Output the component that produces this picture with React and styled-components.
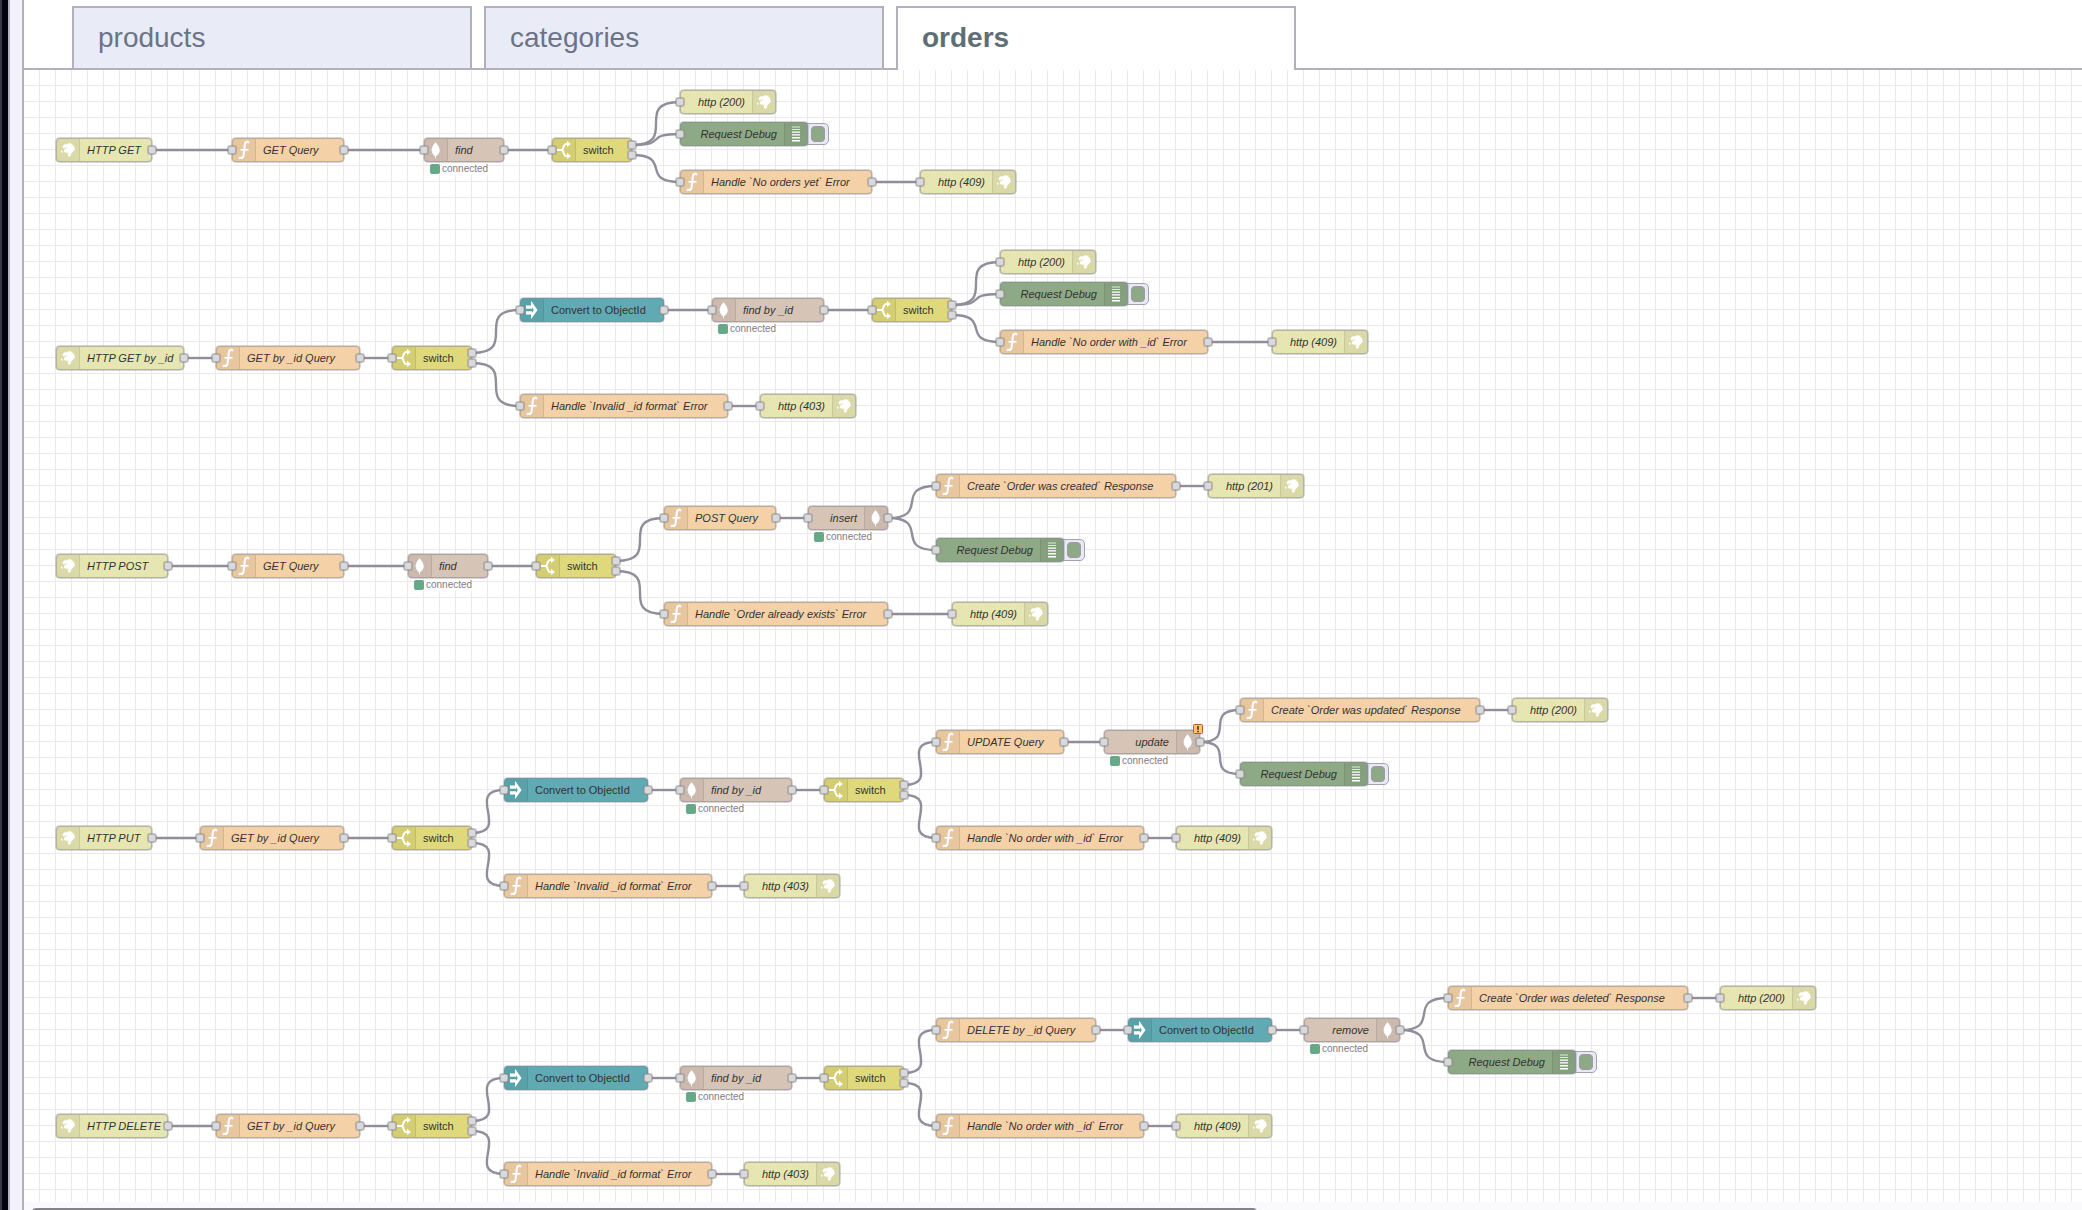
import React from "react";
import styled, { createGlobalStyle } from "styled-components";

const CELL = 16;

const GlobalStyle = createGlobalStyle`
  *, *::before, *::after { box-sizing: border-box; }
  body {
    margin: 0;
    overflow: hidden;
    background: #fff;
    font-family: "Liberation Sans", Arial, sans-serif;
  }
`;

const Page = styled.div`
  display: flex;
  height: 100vh;
`;

const WindowEdge = styled.div`
  flex: none;
  width: 10px;
  background: #020210;
  border-left: 2px solid #393846;
  border-right: 2px solid #b4b2bf;
`;

const PaletteEdge = styled.div`
  flex: none;
  width: 14px;
  background: #f2f1fc;
  border-right: 2px solid #b2b0bd;
`;

const Workspace = styled.main`
  flex: 1;
  min-width: 0;
  display: flex;
  flex-direction: column;
`;

const TabBar = styled.nav`
  flex: none;
  display: flex;
  align-items: flex-end;
  gap: 12px;
  height: 70px;
  padding-left: 48px;
  border-bottom: 2px solid #b2b0bd;
`;

const Tab = styled.button`
  width: 400px;
  height: ${(p) => (p.$active ? 64 : 62)}px;
  margin: 0 0 ${(p) => (p.$active ? -2 : 0)}px;
  padding: 0 24px ${(p) => (p.$active ? 2 : 0)}px;
  border: 2px solid #b2b0bd;
  border-bottom: 0;
  background: ${(p) => (p.$active ? "#fff" : "#e9ebf7")};
  color: ${(p) => (p.$active ? "#5e6e75" : "#6b7487")};
  font: ${(p) => (p.$active ? "bold" : "normal")} 28px/60px "Liberation Sans", Arial, sans-serif;
  text-align: left;
`;

const Canvas = styled.div`
  position: relative;
  flex: 1;
  min-height: 0;
  overflow: hidden;
  background-color: #fff;
  background-image:
    linear-gradient(to right, transparent 15px, #eae8f6 15px),
    linear-gradient(to bottom, transparent 15px, #eae8f6 15px);
  background-size: 16px 16px;
`;

const Wires = styled.svg`
  position: absolute;
  inset: 0;
  width: 100%;
  height: 100%;
  fill: none;
  stroke: #908e9b;
  stroke-width: 2.4;
`;

const NodeBox = styled.div`
  position: absolute;
  height: 24px;
`;

const Body = styled.div`
  position: relative;
  display: flex;
  flex-direction: ${(p) => (p.$flip ? "row-reverse" : "row")};
  align-items: center;
  height: 24px;
  overflow: hidden;
  border: 1px solid rgba(130, 130, 140, 0.5);
  border-radius: 4px;
  background: ${(p) => p.$color};
  box-shadow: 0 0 0 1px rgba(140, 138, 145, 0.35);
`;

const IconCell = styled.span`
  flex: none;
  display: flex;
  align-items: center;
  justify-content: center;
  width: 23px;
  height: 22px;
  background: rgba(0, 0, 0, 0.05);
  border-${(p) => (p.$flip ? "left" : "right")}: 1px solid rgba(0, 0, 0, 0.08);
`;

const Label = styled.span`
  padding: 1px 7px 0;
  color: #333;
  font-size: 11px;
  line-height: 21px;
  font-style: ${(p) => (p.$plain ? "normal" : "italic")};
  white-space: nowrap;
`;

const Port = styled.span`
  position: absolute;
  top: ${(p) => 8 + p.$shift}px;
  ${(p) => p.$side}: -4px;
  width: 8px;
  height: 8px;
  border: 1px solid #b2b1b5;
  border-radius: 2px;
  background: #d9d9d9;
  box-shadow: 0 0 0 1px rgba(130, 128, 138, 0.45);
`;

const Toggle = styled.button`
  position: absolute;
  top: 1px;
  right: -21px;
  display: flex;
  align-items: center;
  justify-content: flex-end;
  width: 28px;
  height: 22px;
  padding: 0 3px;
  border: 1px solid #a3a2b3;
  border-radius: 5px;
  background: #e8e8f6;
`;

const ToggleMark = styled.span`
  width: 14px;
  height: 16px;
  border: 1px solid #9a9ca0;
  border-radius: 4px;
  background: #8ea986;
`;

const Status = styled.span`
  position: absolute;
  top: 25px;
  left: 6px;
  display: flex;
  align-items: center;
  gap: 2px;
  height: 12px;
  color: #7e7d88;
  font-size: 10px;
  line-height: 12px;
`;

const StatusDot = styled.span`
  width: 10px;
  height: 10px;
  border-radius: 2px;
  background: #65a88a;
`;

const StatusText = styled.span`
  background: #fff;
`;

const Warning = styled.svg`
  position: absolute;
  top: -6px;
  right: -3px;
  width: 10px;
  height: 10px;
`;

const Footer = styled.div`
  flex: none;
  height: 8px;
  padding: 6px 8px 0;
  overflow: hidden;
  background: #fafafd;
`;

const ScrollThumb = styled.div`
  width: 60%;
  height: 8px;
  border-radius: 4px;
  background: #83828d;
`;

function Globe() {
  return (
    <svg width="16" height="16" viewBox="0 0 16 16" fill="#fff">
      <path d="M2.600 4.400 4 2.800 6.200 2l.6.800L9 1l2.600.700 2 2 1.200 2.700-.3 1.800-1 .2-.6 1.500-1.600 1.700-.4 1.900-1.300 1.300-1.200-.2-.5-1.600.1-1.900-1.700-.6-1.300.2-1.200-1.300.4-1.700 1.600-1.200 1.600-.1-.4-.9-1.600.3-1.600 1L3.300 6z" />
      <path d="M.9 8.300 2.200 8.900l.6 1.400-.8.600-.9-1z" />
    </svg>
  );
}

function Fn() {
  return (
    <svg width="16" height="20" viewBox="0 0 16 20" fill="none" stroke="#fff" strokeWidth="2.200">
      <path d="M13 2.700C11.800 1.200 9.200 1.300 8.800 4.500L7.700 14.800c-.4 3.500-2.900 3.700-4.700 2.500" />
      <path d="M4.500 9.800h8" strokeWidth="1.700" />
    </svg>
  );
}

function Leaf() {
  return (
    <svg width="16" height="20" viewBox="0 0 16 20" fill="#fff">
      <path d="M7.500 2c2.600 3 4.200 5.400 4.200 8.200 0 2.600-1.600 4.800-3.700 6v2.300h-.8v-2.300c-2-1.200-3.600-3.400-3.600-6C3.600 7.400 5.100 5 7.500 2z" />
    </svg>
  );
}

function Fork() {
  return (
    <svg width="20" height="20" viewBox="0 0 20 20" fill="none" stroke="#fff" strokeWidth="2">
      <path d="M3 10h5" />
      <path d="M14 4h-1.700C9.500 4 10 7.500 8.200 10c1.800 2.500 1.300 6 4.100 6H14" />
      <path d="M13 .8 17 4l-4 3.200zM13 12.800 17 16l-4 3.200z" fill="#fff" stroke="none" />
    </svg>
  );
}

function Arrows() {
  return (
    <svg width="20" height="20" viewBox="0 0 20 20" fill="#fff">
      <path d="M4 5.500h6v3.200H4zM4 11.300h6v3.200H4z" />
      <path d="M9 .8 15.500 10 9 19.200v-4.700L11.800 10 9 5.500z" />
    </svg>
  );
}

function Bars() {
  return (
    <svg width="10" height="18" viewBox="0 0 10 18" fill="#fff">
      <path d="M1 1.500h8v1H1zM1 4h8v1H1z" opacity=".75" />
      <path d="M1 6.500h8v1.200H1zM1 9.200h8v1.300H1zM1 12h8v1.400H1zM1 15h8v1.500H1z" />
    </svg>
  );
}

const KINDS = {
  httpIn: { color: "#e5e6b1", icon: Globe, outs: 1 },
  httpOut: { color: "#e5e6b1", icon: Globe, flip: true, input: true, outs: 0 },
  fn: { color: "#f5d1a7", icon: Fn, input: true, outs: 1 },
  find: { color: "#d6c4b7", icon: Leaf, input: true, outs: 1, status: true },
  store: { color: "#d6c4b7", icon: Leaf, flip: true, input: true, outs: 1, status: true },
  branch: { color: "#e0d97b", icon: Fork, input: true, outs: 2, plain: true },
  convert: { color: "#5faab3", icon: Arrows, input: true, outs: 1, plain: true },
  debug: { color: "#8ea986", icon: Bars, flip: true, input: true, outs: 0 },
};

// id, kind, column, row, columns wide, label
const NODES = [
  ["a1", "httpIn", 2, 5, 6, "HTTP GET"],
  ["a2", "fn", 13, 5, 7, "GET Query"],
  ["a3", "find", 25, 5, 5, "find"],
  ["a4", "branch", 33, 5, 5, "switch"],
  ["a5", "httpOut", 41, 2, 6, "http (200)"],
  ["a6", "debug", 41, 4, 8, "Request Debug"],
  ["a7", "fn", 41, 7, 12, "Handle `No orders yet` Error"],
  ["a8", "httpOut", 56, 7, 6, "http (409)"],

  ["b1", "httpIn", 2, 18, 8, "HTTP GET by _id"],
  ["b2", "fn", 12, 18, 9, "GET by _id Query"],
  ["b3", "branch", 23, 18, 5, "switch"],
  ["b4", "convert", 31, 15, 9, "Convert to ObjectId"],
  ["b5", "find", 43, 15, 7, "find by _id"],
  ["b6", "branch", 53, 15, 5, "switch"],
  ["b7", "httpOut", 61, 12, 6, "http (200)"],
  ["b8", "debug", 61, 14, 8, "Request Debug"],
  ["b9", "fn", 61, 17, 13, "Handle `No order with _id` Error"],
  ["b10", "httpOut", 78, 17, 6, "http (409)"],
  ["b11", "fn", 31, 21, 13, "Handle `Invalid _id format` Error"],
  ["b12", "httpOut", 46, 21, 6, "http (403)"],

  ["c1", "httpIn", 2, 31, 7, "HTTP POST"],
  ["c2", "fn", 13, 31, 7, "GET Query"],
  ["c3", "find", 24, 31, 5, "find"],
  ["c4", "branch", 32, 31, 5, "switch"],
  ["c5", "fn", 40, 28, 7, "POST Query"],
  ["c6", "store", 49, 28, 5, "insert"],
  ["c7", "fn", 57, 26, 15, "Create `Order was created` Response"],
  ["c8", "httpOut", 74, 26, 6, "http (201)"],
  ["c9", "debug", 57, 30, 8, "Request Debug"],
  ["c10", "fn", 40, 34, 14, "Handle `Order already exists` Error"],
  ["c11", "httpOut", 58, 34, 6, "http (409)"],

  ["d1", "httpIn", 2, 48, 6, "HTTP PUT"],
  ["d2", "fn", 11, 48, 9, "GET by _id Query"],
  ["d3", "branch", 23, 48, 5, "switch"],
  ["d4", "convert", 30, 45, 9, "Convert to ObjectId"],
  ["d5", "find", 41, 45, 7, "find by _id"],
  ["d6", "branch", 50, 45, 5, "switch"],
  ["d7", "fn", 57, 42, 8, "UPDATE Query"],
  ["d8", "store", 67.5, 42, 6, "update", true],
  ["d9", "fn", 76, 40, 15, "Create `Order was updated` Response"],
  ["d10", "httpOut", 93, 40, 6, "http (200)"],
  ["d11", "debug", 76, 44, 8, "Request Debug"],
  ["d12", "fn", 57, 48, 13, "Handle `No order with _id` Error"],
  ["d13", "httpOut", 72, 48, 6, "http (409)"],
  ["d14", "fn", 30, 51, 13, "Handle `Invalid _id format` Error"],
  ["d15", "httpOut", 45, 51, 6, "http (403)"],

  ["e1", "httpIn", 2, 66, 7, "HTTP DELETE"],
  ["e2", "fn", 12, 66, 9, "GET by _id Query"],
  ["e3", "branch", 23, 66, 5, "switch"],
  ["e4", "convert", 30, 63, 9, "Convert to ObjectId"],
  ["e5", "find", 41, 63, 7, "find by _id"],
  ["e6", "branch", 50, 63, 5, "switch"],
  ["e7", "fn", 57, 60, 10, "DELETE by _id Query"],
  ["e8", "convert", 69, 60, 9, "Convert to ObjectId"],
  ["e9", "store", 80, 60, 6, "remove"],
  ["e10", "fn", 89, 58, 15, "Create `Order was deleted` Response"],
  ["e11", "httpOut", 106, 58, 6, "http (200)"],
  ["e12", "debug", 89, 62, 8, "Request Debug"],
  ["e13", "fn", 57, 66, 13, "Handle `No order with _id` Error"],
  ["e14", "httpOut", 72, 66, 6, "http (409)"],
  ["e15", "fn", 30, 69, 13, "Handle `Invalid _id format` Error"],
  ["e16", "httpOut", 45, 69, 6, "http (403)"],
].map(([id, kind, col, row, span, label, invalid]) => ({
  id, kind, label, invalid, x: col * CELL, y: row * CELL, w: span * CELL,
}));

const BY_ID = Object.fromEntries(NODES.map((n) => [n.id, n]));

// source, output index, target
const LINKS = `
a1 0 a2,a2 0 a3,a3 0 a4,a4 0 a5,a4 0 a6,a4 1 a7,a7 0 a8,
b1 0 b2,b2 0 b3,b3 0 b4,b4 0 b5,b5 0 b6,b6 0 b7,b6 0 b8,b6 1 b9,b9 0 b10,b3 1 b11,b11 0 b12,
c1 0 c2,c2 0 c3,c3 0 c4,c4 0 c5,c5 0 c6,c6 0 c7,c7 0 c8,c6 0 c9,c4 1 c10,c10 0 c11,
d1 0 d2,d2 0 d3,d3 0 d4,d4 0 d5,d5 0 d6,d6 0 d7,d7 0 d8,d8 0 d9,d9 0 d10,d8 0 d11,d6 1 d12,d12 0 d13,d3 1 d14,d14 0 d15,
e1 0 e2,e2 0 e3,e3 0 e4,e4 0 e5,e5 0 e6,e6 0 e7,e7 0 e8,e8 0 e9,e9 0 e10,e10 0 e11,e9 0 e12,e6 1 e13,e13 0 e14,e3 1 e15,e15 0 e16
`.trim().split(/,\s*/).map((s) => s.split(" "));

function wirePath([from, out, to]) {
  const a = BY_ID[from];
  const b = BY_ID[to];
  const shift = KINDS[a.kind].outs === 2 ? (out === "0" ? -5 : 5) : 0;
  const x1 = a.x + a.w;
  const y1 = a.y + shift;
  const reach = 0.75 * Math.min(Math.hypot(b.x - x1, b.y - y1), 80);
  return `M${x1} ${y1}C${x1 + reach} ${y1} ${b.x - reach} ${b.y} ${b.x} ${b.y}`;
}

function FlowNode({ node }) {
  const kind = KINDS[node.kind];
  const Icon = kind.icon;
  return (
    <NodeBox style={{ left: node.x, top: node.y - 12, width: node.w }}>
      {node.kind === "debug" && (
        <Toggle aria-label="Toggle debug output"><ToggleMark /></Toggle>
      )}
      <Body $color={kind.color} $flip={kind.flip}>
        <IconCell $flip={kind.flip}><Icon /></IconCell>
        <Label $plain={kind.plain}>{node.label}</Label>
      </Body>
      {kind.input && <Port $side="left" $shift={0} />}
      {kind.outs === 1 && <Port $side="right" $shift={0} />}
      {kind.outs === 2 && <Port $side="right" $shift={-5} />}
      {kind.outs === 2 && <Port $side="right" $shift={5} />}
      {kind.status && (
        <Status><StatusDot /><StatusText>connected</StatusText></Status>
      )}
      {node.invalid && (
        <Warning viewBox="0 0 10 10">
          <rect x=".5" y=".5" width="9" height="9" rx="1" fill="#fbc66c" stroke="#b5562e" />
          <path d="M4.200 2h1.600v3.800H4.200zM4.200 6.700h1.600v1.500H4.200z" fill="#4a3210" />
        </Warning>
      )}
    </NodeBox>
  );
}

export default function App() {
  return (
    <>
      <GlobalStyle />
      <Page>
        <WindowEdge />
        <PaletteEdge />
        <Workspace>
          <TabBar>
            <Tab>products</Tab>
            <Tab>categories</Tab>
            <Tab $active>orders</Tab>
          </TabBar>
          <Canvas>
            <Wires>
              {LINKS.map((link) => <path key={link.join("-")} d={wirePath(link)} />)}
            </Wires>
            {NODES.map((node) => <FlowNode key={node.id} node={node} />)}
          </Canvas>
          <Footer><ScrollThumb /></Footer>
        </Workspace>
      </Page>
    </>
  );
}
